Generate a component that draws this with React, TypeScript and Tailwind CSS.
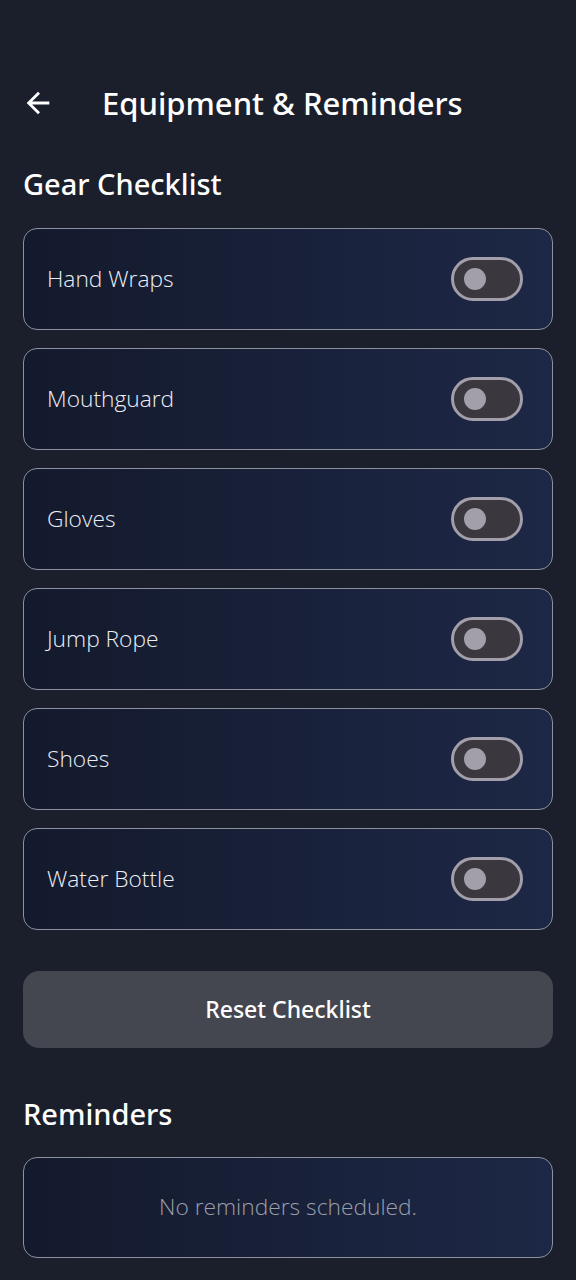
const gear = ['Hand Wraps', 'Mouthguard', 'Gloves', 'Jump Rope', 'Shoes', 'Water Bottle']

const BackArrow = () => (
  <svg viewBox="0 0 24 24" className="h-[34px] w-[34px]" fill="currentColor">
    <path d="M20 11H7.83l5.59-5.59L12 4l-8 8 8 8 1.41-1.41L7.83 13H20v-2z" />
  </svg>
)

const Toggle = () => (
  <div className="flex h-[44px] w-[72px] items-center rounded-full border-[3px] border-[#a29eaa] bg-[#3a373f] pl-[10px]">
    <div className="h-[22px] w-[22px] rounded-full bg-[#a29eaa]" />
  </div>
)

export default function App() {
  return (
    <div className="min-h-[1280px] bg-[#1b1f2c] px-[23px] font-['Noto_Sans',sans-serif] text-white">
      <div className="flex h-[208px] flex-col">
        <div className="flex items-center pt-[84px]">
          <span className="-ml-[2px] text-white">
            <BackArrow />
          </span>
          <h1 className="ml-[47px] text-[31px] font-medium leading-[38px]">Equipment &amp; Reminders</h1>
        </div>
        <h2 className="mt-[44px] text-[29px] font-medium leading-[36px]">Gear Checklist</h2>
      </div>

      <div className="mt-[20px] flex flex-col gap-[18px]">
        {gear.map((item) => (
          <div
            key={item}
            className="flex h-[102px] items-center justify-between rounded-[14px] border border-[#8d909e] bg-gradient-to-r from-[#141a2d] to-[#1d2846] pl-[23px] pr-[29px]"
          >
            <span className="font-['Open_Sans',sans-serif] text-[22.75px] font-light text-[#eceef4]">{item}</span>
            <Toggle />
          </div>
        ))}
      </div>

      <button className="mt-[41px] flex h-[77px] w-full items-center justify-center rounded-[16px] bg-[#444650] text-[23px] font-medium text-white">
        Reset Checklist
      </button>

      <h2 className="mt-[48px] text-[29px] font-medium leading-[36px]">Reminders</h2>

      <div className="mt-[25px] flex h-[101px] items-center justify-center rounded-[14px] border border-[#8d909e] bg-gradient-to-r from-[#141a2d] to-[#1d2846]">
        <span className="font-['Open_Sans',sans-serif] text-[22.75px] font-light text-[#9c9eaa]">No reminders scheduled.</span>
      </div>
    </div>
  )
}
